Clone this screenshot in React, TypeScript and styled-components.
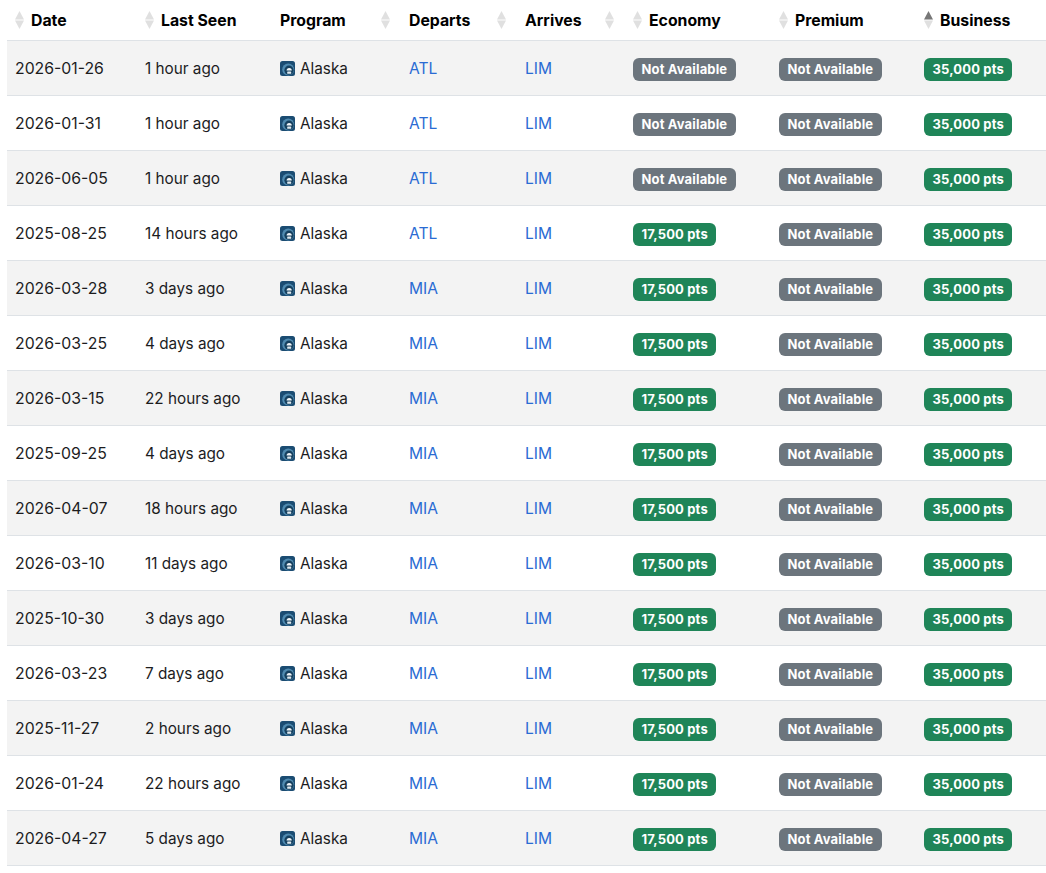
import React from 'react';
import styled, { createGlobalStyle } from 'styled-components';

interface IFlight {
  date: string;
  seen: string;
  from: string;
  economy?: string;
}

const FLIGHTS: IFlight[] = [
  { date: '2026-01-26', seen: '1 hour ago', from: 'ATL' },
  { date: '2026-01-31', seen: '1 hour ago', from: 'ATL' },
  { date: '2026-06-05', seen: '1 hour ago', from: 'ATL' },
  { date: '2025-08-25', seen: '14 hours ago', from: 'ATL', economy: '17,500 pts' },
  { date: '2026-03-28', seen: '3 days ago', from: 'MIA', economy: '17,500 pts' },
  { date: '2026-03-25', seen: '4 days ago', from: 'MIA', economy: '17,500 pts' },
  { date: '2026-03-15', seen: '22 hours ago', from: 'MIA', economy: '17,500 pts' },
  { date: '2025-09-25', seen: '4 days ago', from: 'MIA', economy: '17,500 pts' },
  { date: '2026-04-07', seen: '18 hours ago', from: 'MIA', economy: '17,500 pts' },
  { date: '2026-03-10', seen: '11 days ago', from: 'MIA', economy: '17,500 pts' },
  { date: '2025-10-30', seen: '3 days ago', from: 'MIA', economy: '17,500 pts' },
  { date: '2026-03-23', seen: '7 days ago', from: 'MIA', economy: '17,500 pts' },
  { date: '2025-11-27', seen: '2 hours ago', from: 'MIA', economy: '17,500 pts' },
  { date: '2026-01-24', seen: '22 hours ago', from: 'MIA', economy: '17,500 pts' },
  { date: '2026-04-27', seen: '5 days ago', from: 'MIA', economy: '17,500 pts' },
];

const GlobalStyle = createGlobalStyle`
  html, body {
    margin: 0;
    padding: 0;
    background: #fff;
  }
  body {
    font-family: Inter, "Liberation Sans", sans-serif;
    font-size: 16px;
    color: #1c1c1e;
  }
`;

const Page = styled.div`
  padding-left: 7px;
`;

const Table = styled.table`
  width: 1039px;
  table-layout: fixed;
  border-collapse: collapse;
`;

const HeadCell = styled.th`
  height: 40px;
  padding: 0 11px 0 8px;
  border-bottom: 1px solid #dee2e6;
  text-align: left;
  font-size: 15.8px;
  font-weight: 700;
  color: #000;
`;

const HeadInner = styled.div<{ $iconRight?: boolean }>`
  display: flex;
  align-items: center;
  flex-direction: ${({ $iconRight }) => ($iconRight ? 'row-reverse' : 'row')};
  justify-content: ${({ $iconRight }) => ($iconRight ? 'space-between' : 'flex-start')};
  gap: 7px;
`;

const Row = styled.tr`
  &:nth-child(odd) {
    background: #f3f3f3;
  }
`;

const Cell = styled.td`
  height: 54px;
  padding: 0 8px;
  border-bottom: 1px solid #dee2e6;
  font-size: 15.3px;
  color: #1c1c1e;
`;

const DateCell = styled(Cell)`
  font-size: 15.8px;
`;

const ProgramWrap = styled.div`
  display: flex;
  align-items: center;
  gap: 5px;
`;

const AirportLink = styled.a`
  color: #2a6bd3;
  text-decoration: none;
  font-size: 15.6px;
`;

const Badge = styled.span<{ $available: boolean }>`
  display: inline-block;
  margin-top: 2px;
  padding: 0 8.5px;
  line-height: 23px;
  border-radius: 6px;
  font-size: 13px;
  font-weight: 700;
  letter-spacing: 0.15px;
  white-space: nowrap;
  color: #fff;
  background: ${({ $available }) => ($available ? '#1f8558' : '#6c757d')};
  vertical-align: middle;
`;

const IconSvg = styled.svg`
  flex: none;
  display: block;
`;

const SortIcon: React.FC<{ active?: boolean }> = ({ active }) => (
  <IconSvg width="9" height="18" viewBox="0 0 9 18">
    <path d="M4.5 0 L9 8.6 L0 8.6 Z" fill={active ? '#777' : '#e0e0e0'} />
    <path d="M4.5 18 L9 9.4 L0 9.4 Z" fill="#e0e0e0" />
  </IconSvg>
);

const AlaskaLogo: React.FC = () => (
  <IconSvg width="15" height="15" viewBox="0 0 15 15">
    <rect width="15" height="15" rx="2.5" fill="#1b4c72" />
    <circle cx="8.2" cy="8.6" r="6" fill="#4f8ab0" />
    <circle cx="9" cy="9.2" r="4.6" fill="#15405f" />
    <path d="M6.6 9.6 a2.6 2.6 0 0 1 5.2 0 Z" fill="#f2f6f9" />
    <rect x="7.2" y="10.4" width="4" height="2.4" rx="0.6" fill="#dfe9f0" />
  </IconSvg>
);

const COLUMNS = [
  { label: 'Date', width: 130 },
  { label: 'Last Seen', width: 135 },
  { label: 'Program', width: 129, iconRight: true },
  { label: 'Departs', width: 116, iconRight: true },
  { label: 'Arrives', width: 108, iconRight: true },
  { label: 'Economy', width: 146 },
  { label: 'Premium', width: 145 },
  { label: 'Business', width: 130, active: true },
];

export default function App() {
  return (
    <Page>
      <GlobalStyle />
      <Table>
        <colgroup>
          {COLUMNS.map((c) => (
            <col key={c.label} width={c.width} />
          ))}
        </colgroup>
        <thead>
          <tr>
            {COLUMNS.map((c) => (
              <HeadCell key={c.label}>
                <HeadInner $iconRight={c.iconRight}>
                  <SortIcon active={c.active} />
                  <span>{c.label}</span>
                </HeadInner>
              </HeadCell>
            ))}
          </tr>
        </thead>
        <tbody>
          {FLIGHTS.map((f, i) => (
            <Row key={i}>
              <DateCell>{f.date}</DateCell>
              <Cell>{f.seen}</Cell>
              <Cell>
                <ProgramWrap>
                  <AlaskaLogo />
                  Alaska
                </ProgramWrap>
              </Cell>
              <Cell>
                <AirportLink href="#">{f.from}</AirportLink>
              </Cell>
              <Cell>
                <AirportLink href="#">LIM</AirportLink>
              </Cell>
              <Cell>
                <Badge $available={!!f.economy}>{f.economy || 'Not Available'}</Badge>
              </Cell>
              <Cell>
                <Badge $available={false}>Not Available</Badge>
              </Cell>
              <Cell>
                <Badge $available>35,000 pts</Badge>
              </Cell>
            </Row>
          ))}
        </tbody>
      </Table>
    </Page>
  );
}
